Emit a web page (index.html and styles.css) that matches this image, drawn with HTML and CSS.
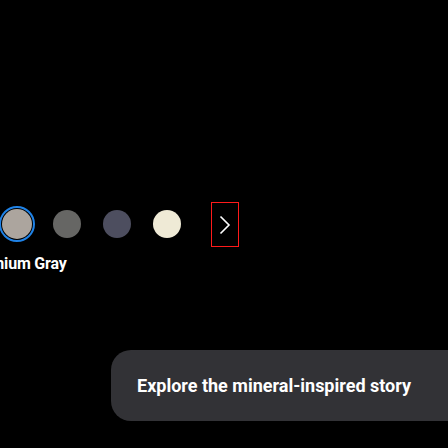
FILE: index.html
```html
<!DOCTYPE html>
<html lang="en">
<head>
<meta charset="utf-8">
<link rel="stylesheet" href="styles.css">
</head>
<body>
<main class="page">
  <section class="colors">
    <div class="swatch-row">
      <button class="swatch selected" aria-label="Titanium Gray"><span class="dot dot-gray"></span></button>
      <button class="swatch" aria-label="Titanium Dark"><span class="dot dot-dark"></span></button>
      <button class="swatch" aria-label="Titanium Blue"><span class="dot dot-blue"></span></button>
      <button class="swatch" aria-label="Titanium Yellow"><span class="dot dot-cream"></span></button>
      <button class="next" aria-label="Next">
        <svg width="12" height="20" viewBox="0 0 12 20"><path d="M1.5 1.5 L10 10 L1.5 18.5" fill="none" stroke="#fff" stroke-width="1.6"/></svg>
      </button>
    </div>
    <p class="color-name">Titanium Gray</p>
  </section>
  <a class="story" href="#">Explore the mineral-inspired story</a>
</main>
</body>
</html>
```
FILE: styles.css
```css
html, body {
  margin: 0;
  padding: 0;
  background: #000;
  overflow: hidden;
  width: 448px;
  height: 448px;
}
.page {
  font-family: Roboto, "Open Sans", sans-serif;
  color: #fff;
  padding-top: 202px;
}
.colors {
  margin-left: -1px;
}
.swatch-row {
  display: flex;
  align-items: center;
  gap: 14px;
  height: 45px;
}
.swatch {
  width: 36px;
  height: 36px;
  border-radius: 50%;
  border: 2px solid transparent;
  background: transparent;
  padding: 0;
  margin: 0 0 2px 0;
  display: flex;
  align-items: center;
  justify-content: center;
  box-sizing: border-box;
  flex: none;
}
.swatch.selected {
  border-color: #1f82e6;
}
.dot {
  width: 28px;
  height: 28px;
  border-radius: 50%;
  display: block;
  flex: none;
}
.swatch.selected .dot {
  width: 30px;
  height: 30px;
}
.dot-gray { background: #aca59e; }
.dot-dark { background: #666664; }
.dot-blue { background: #4d4e5f; }
.dot-cream { background: #efead6; }
.next {
  margin-left: 12px;
  width: 28px;
  height: 45px;
  box-sizing: border-box;
  border: 1px solid #ff1a1a;
  background: transparent;
  padding: 0;
  display: flex;
  align-items: center;
  justify-content: center;
  flex: none;
}
.color-name {
  margin: 7px 0 0 -31px;
  font-size: 16px;
  font-weight: 700;
  line-height: 20px;
  letter-spacing: -0.2px;
  white-space: nowrap;
}
.story {
  display: block;
  margin: 76px 0 0 111px;
  width: 360px;
  height: 71px;
  box-sizing: border-box;
  padding-left: 26px;
  line-height: 71px;
  background: #323236;
  border-radius: 20px;
  color: #fff;
  text-decoration: none;
  font-size: 18px;
  font-weight: 700;
  white-space: nowrap;
}
```
